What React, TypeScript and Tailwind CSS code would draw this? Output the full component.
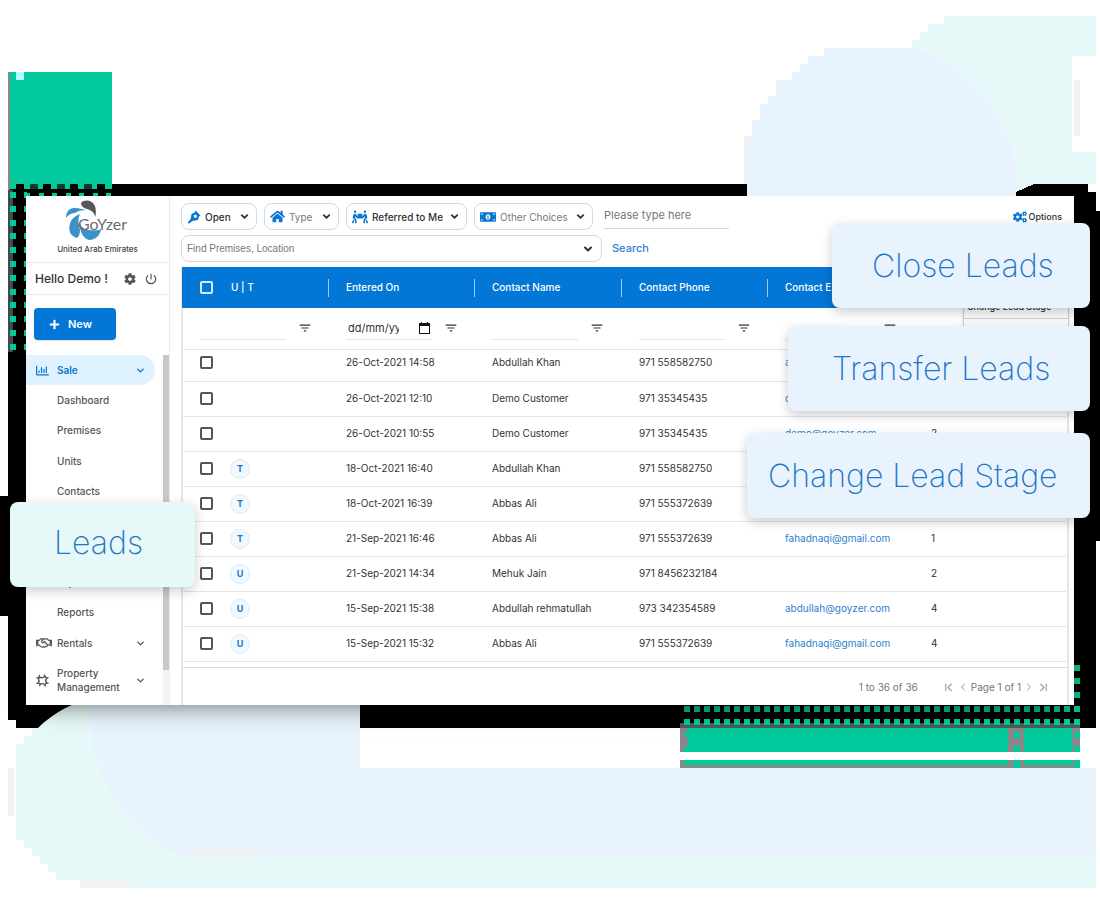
import React from 'react';
import { ChevronDown, ChevronLeft, ChevronRight, ChevronFirst, ChevronLast } from 'lucide-react';
import { FaCog, FaCogs, FaHome, FaMoneyBillAlt, FaPeopleCarry, FaPlus, FaRegChartBar, FaRegHandshake } from 'react-icons/fa';
import { MdFilterList, MdOutlinePowerSettingsNew } from 'react-icons/md';

type Lead = {
  tag?: 'T' | 'U';
  entered: string;
  name: string;
  phone: string;
  email: string;
  count: string;
};

const leads: Lead[] = [
  { entered: '26-Oct-2021 14:58', name: 'Abdullah Khan', phone: '971 558582750', email: 'abdullah@goyzer.com', count: '' },
  { entered: '26-Oct-2021 12:10', name: 'Demo Customer', phone: '971 35345435', email: 'demo@goyzer.com', count: '' },
  { entered: '26-Oct-2021 10:55', name: 'Demo Customer', phone: '971 35345435', email: 'demo@goyzer.com', count: '2' },
  { tag: 'T', entered: '18-Oct-2021 16:40', name: 'Abdullah Khan', phone: '971 558582750', email: '', count: '' },
  { tag: 'T', entered: '18-Oct-2021 16:39', name: 'Abbas Ali', phone: '971 555372639', email: '', count: '' },
  { tag: 'T', entered: '21-Sep-2021 16:46', name: 'Abbas Ali', phone: '971 555372639', email: 'fahadnaqi@gmail.com', count: '1' },
  { tag: 'U', entered: '21-Sep-2021 14:34', name: 'Mehuk Jain', phone: '971 8456232184', email: '', count: '2' },
  { tag: 'U', entered: '15-Sep-2021 15:38', name: 'Abdullah rehmatullah', phone: '973 342354589', email: 'abdullah@goyzer.com', count: '4' },
  { tag: 'U', entered: '15-Sep-2021 15:32', name: 'Abbas Ali', phone: '971 555372639', email: 'fahadnaqi@gmail.com', count: '4' },
];

const range = (n: number) => Array.from({ length: n }, (_, i) => i);

function Backdrop() {
  return (
    <svg className="absolute left-0 top-0" width="1100" height="900" viewBox="0 0 1100 900" shapeRendering="crispEdges" aria-hidden="true">
      <path fill="#e6f8f7" d="M944 16H1096V56H1072V152H1096V184H900V48H912V40H920V32H928V24H944Z" />
      <path fill="#f2f2f2" d="M1074 80h6v56h-6zM744 136h8v48h-8z" />
      <path fill="#000" d="M8 184H1088V192H1096V211H1100V541H1096V728H16V720H8V616H0V496H8Z" />
      <path fill="#e6f8f7" d="M1000 150H1072V184H1034L1016 192H1000Z" />
      <path
        fill="#e8f3fd"
        shapeRendering="auto"
        d="M824 48H912C975 66 1016 122 1016 183V200H747V136H752V120H760V104H768V96H776V80H792V72H800V64H808V56H824Z"
      />
      <path
        fill="#e6f8f7"
        shapeRendering="auto"
        d="M85 700C66 706 50 716 38 728H32V736H24V744H16V840H24V848H32V856H40V864H48V872H56V880H80V888H1096V768H360V700Z"
      />
      <path fill="#f2f2f2" d="M8 768h6v48H8zM80 881h50v7H80z" />
      <path fill="#e8f3fd" shapeRendering="auto" d="M90 700H360V768H1096V856H180C128 832 92 780 90 720Z" />
      <path fill="#f3efef" d="M192 851h72v5h-72z" />

      <path fill="#02ca9c" d="M8 72h104v117H8z" />
      <path fill="#888" d="M8 72h2v118H8z" />
      <path fill="#444c4a" d="M8 190h5v162H8z" />
      <path fill="#b0ffff" d="M16 72h8v8h-8z" />
      {range(7).map((i) => (
        <rect key={`n${i}`} x={16 + Math.round(i * 13.5)} y="184" width="8" height="5" fill={i % 2 ? '#0b3b31' : '#000'} />
      ))}
      {range(7).map((i) => (
        <rect key={`t${i}`} x={25 + Math.round(i * 13.5)} y="193" width="5" height="4" fill="#02ca9c" />
      ))}
      {range(12).map((i) => (
        <React.Fragment key={`l${i}`}>
          <rect x="10" y={192 + Math.round(i * 13.8)} width="6" height="6" fill="#02ca9c" />
          <rect x="24" y={192 + Math.round(i * 13.8)} width="3" height="6" fill="#02ca9c" />
        </React.Fragment>
      ))}

      <path fill="#888" d="M680 728H1080V752H680ZM680 760H1080V768H680Z" />
      <path fill="#4c5c59" d="M680 723h400v5H680z" />
      <path fill="#02ca9c" d="M688 728H1008V752H684V746H688V737H684V732H688ZM1024 728h48v24h-48zM684 760h324v5H684zM1024 760h48v5h-48z" />
      <path fill="#02ca9c" d="M1014 732h6v6h-6zM1014 746h6v6h-6zM1074 732h6v6h-6zM1074 746h6v6h-6zM1014 760h6v8h-6zM1074 760h6v8h-6z" />
      {range(40).map((i) => (
        <React.Fragment key={`b${i}`}>
          <rect x={684 + i * 10} y="706" width="6" height="6" fill="#08b98f" />
          <rect x={684 + i * 10} y="719" width="6" height="6" fill="#02ca9c" />
        </React.Fragment>
      ))}
      <path fill="#08b98f" d="M1074 665h6v6h-6zM1074 678h6v6h-6zM1074 692h6v6h-6z" />
    </svg>
  );
}

function Logo() {
  return (
    <svg width="76" height="43" viewBox="0 0 76 43" role="img" aria-label="GoYzer">
      <path fill="#565659" d="M21 4C25 0 32 1 35 7 36 10 36 14 35.500 18 34 13 31 11 27 10 23 9 21 7 21 4Z" />
      <path fill="#3b93c5" d="M6 19C6 12 10 8.500 15 9 19 9 22 10 26 11 21 11 18 12 15 14 12 14 9 15 6 19Z" />
      <path fill="#3b93c5" d="M20 15C17 21 19 26 20 31 20 35 19 37 17 39 10 37 8 31 10 25 11 20 15 17 20 15Z" />
      <path fill="#3b93c5" d="M20 24C22 30 26 31 30 31 34 31 38 32 41 30 40 37 35 41 29 41 24 40 19 33 20 24Z" />
      <text x="18" y="31" fontFamily="Lato, sans-serif" fontSize="16" fill="#6c6c70">
        GoYzer
      </text>
    </svg>
  );
}

function PropertyIcon() {
  return (
    <svg width="13" height="13" viewBox="0 0 14 14" fill="none" stroke="#555" strokeWidth="1.5" strokeLinecap="round" strokeLinejoin="round" aria-hidden="true">
      <path d="M4 3.500Q7 5 9.500 2.500L11.500 4.500Q9.500 7 11.500 9.500L9.500 11.500Q7 9.500 4.500 11L2.500 9.500Q4 7 2.500 5Z" />
      <path d="M3.500 1.500 4 3.500 1 4.200M9 1 9.500 2.500M13 4 11.500 4.500M11.500 9.500 13 9.800M9.500 11.500 10 13M4.500 11 4 12.500M2.500 9.500 1 10" />
    </svg>
  );
}

function PenIcon() {
  return (
    <svg width="14" height="14" viewBox="0 0 14 14" aria-hidden="true">
      <path fill="currentColor" fillRule="evenodd" d="M8.500.5 13.500 5.500 12 6.500 10.800 10 5.500 11 2 13.500.5 13 3.800 8.500 4.500 4 7.800 2.200ZM8.200 4.800A1.500 1.500 0 1 0 9.500 7.300 1.500 1.500 0 0 0 8.200 4.800Z" />
    </svg>
  );
}

function CalendarIcon() {
  return (
    <svg width="11" height="12" viewBox="0 0 11 12" className="shrink-0" aria-hidden="true">
      <path fill="#111" fillRule="evenodd" d="M2 0h1v1h5V0h1v1h2v11H0V1h2ZM1 4v7h9V4Z" />
    </svg>
  );
}

function PickList({ label, width, muted, icon }: { label: string; width: string; muted?: boolean; icon: React.ReactNode }) {
  return (
    <label className={`flex h-[27px] items-center rounded-lg border border-[#d3d8df] bg-white pl-[5px] pr-1.5 ${width}`}>
      <span className="shrink-0 text-[#0b76d1]">{icon}</span>
      <select
        aria-label={label}
        className={`ml-1 min-w-0 flex-1 appearance-none bg-transparent text-[10px] leading-4 outline-none ${muted ? 'text-[#777]' : 'font-medium text-[#333]'}`}
      >
        <option>{label}</option>
      </select>
      <ChevronDown size={11} strokeWidth={4} className="shrink-0 text-[#333]" />
    </label>
  );
}

const navLink = 'flex h-[30px] items-center pl-[31px]';

function Sidebar() {
  return (
    <aside className="flex w-36 shrink-0 flex-col border-r border-[#ececec]">
      <div className="flex h-[67px] flex-col items-center border-b border-[#ececec] pt-[3px]">
        <Logo />
        <p className="text-[8px] font-medium leading-[14px] text-[#444]">United Arab Emirates</p>
      </div>
      <div className="flex h-8 items-center border-b border-[#ececec] pl-[9px] pr-[11px]">
        <p className="flex-1 whitespace-nowrap text-xs font-medium text-[#333]">Hello Demo !</p>
        <button aria-label="Settings" className="text-[#555]">
          <FaCog size={12} />
        </button>
        <button aria-label="Log out" className="ml-2 text-[#555]">
          <MdOutlinePowerSettingsNew size={14} />
        </button>
      </div>
      <button className="ml-2 mt-[13px] flex h-8 w-[82px] items-center gap-2 rounded bg-[#0377d6] pl-[15px] text-[11px] font-semibold text-white shadow-sm">
        <FaPlus size={11} />
        New
      </button>
      <div className="mt-[15px] flex flex-1">
        <nav className="flex-1 text-[10px] font-medium text-[#555]">
          <div className="flex h-[303px] flex-col justify-between">
            <a href="#sale" className="mr-2 flex h-[30px] items-center rounded-r-full bg-[#dff2ff] pl-2.5 pr-[9px] font-semibold text-[#0b76c8]">
              <FaRegChartBar size={13} />
              <span className="ml-2 flex-1">Sale</span>
              <ChevronDown size={11} strokeWidth={3} />
            </a>
            <a href="#dashboard" className={navLink}>Dashboard</a>
            <a href="#premises" className={navLink}>Premises</a>
            <a href="#units" className={navLink}>Units</a>
            <a href="#contacts" className={navLink}>Contacts</a>
            <div className="h-[60px]" />
            <a href="#expenses" className={navLink}>Expenses</a>
            <a href="#reports" className={navLink}>Reports</a>
            <a href="#rentals" className="mr-2 flex h-[30px] items-center pl-2.5 pr-[9px]">
              <FaRegHandshake size={16} />
              <span className="ml-[5px] flex-1">Rentals</span>
              <ChevronDown size={11} strokeWidth={3} />
            </a>
          </div>
          <a href="#property" className="mr-2 flex h-11 items-center pl-2.5 pr-[9px] leading-[14px]">
            <PropertyIcon />
            <span className="ml-2 flex-1">
              Property
              <br />
              Management
            </span>
            <ChevronDown size={11} strokeWidth={3} />
          </a>
        </nav>
        <div className="w-1.5 bg-[#f4f4f4]">
          <div className="h-[315px] bg-[#c8c8c8]" />
        </div>
      </div>
    </aside>
  );
}

function FilterCell({ label, date }: { label: string; date?: boolean }) {
  return (
    <td className="p-0 pl-[18px]">
      <div className="flex items-center">
        <div className="flex h-6 w-[86px] items-center border-b border-[#e6e6e6]">
          <input
            aria-label={label}
            placeholder={date ? 'dd/mm/yyyy' : ''}
            className={`min-w-0 bg-transparent text-[11px] text-[#333] outline-none placeholder:text-[#333] ${date ? 'w-[53px] pl-0.5' : 'w-full'}`}
          />
          {date && (
            <span className="ml-auto mr-0.5">
              <CalendarIcon />
            </span>
          )}
        </div>
        <button aria-label={`Filter ${label}`} className="ml-3 text-[#333]">
          <MdFilterList size={14} />
        </button>
      </div>
    </td>
  );
}

function Check({ label, light }: { label: string; light?: boolean }) {
  return (
    <input
      type="checkbox"
      aria-label={label}
      className={`block size-[13px] appearance-none rounded-[2px] border-2 ${light ? 'border-[#d5e9fa]' : 'border-[#555]'}`}
    />
  );
}

const headings = ['Entered On', 'Contact Name', 'Contact Phone', 'Contact Email'];

function LeadsTable() {
  return (
    <div className="border-x-2 border-[#e6e6e6]">
      <table className="-ml-px w-full table-fixed border-collapse text-left text-[10px] text-[#333]">
        <colgroup>
          <col className="w-[146px]" />
          <col className="w-[146px]" />
          <col className="w-[147px]" />
          <col className="w-[146px]" />
          <col className="w-[146px]" />
          <col />
        </colgroup>
        <thead>
          <tr className="h-[41px] bg-[#0377d6] text-white">
            <th className="p-0 pl-[18px]">
              <div className="flex items-center gap-[18px] font-medium">
                <Check label="Select all leads" light />
                <span>U | T</span>
              </div>
            </th>
            {headings.map((h) => (
              <th key={h} className="p-0 font-medium">
                <div className="flex h-[18px] items-center border-l border-[#9fcaf0] pl-[17px]">{h}</div>
              </th>
            ))}
            <th className="p-0" aria-label="Count" />
          </tr>
          <tr className="h-[41px] border-b border-[#e4e4e4]">
            <FilterCell label="U T" />
            <FilterCell label="Entered On" date />
            <FilterCell label="Contact Name" />
            <FilterCell label="Contact Phone" />
            <FilterCell label="Contact Email" />
            <td />
          </tr>
        </thead>
        <tbody>
          {leads.map((lead, i) => (
            <tr key={i} className={`border-b border-[#e4e4e4] [&>td]:pl-[18px] ${i === 0 ? 'h-8 [&>td]:pb-[5px]' : 'h-[35px]'}`}>
              <td className="p-0">
                <div className="flex items-center gap-[17px]">
                  <Check label={`Select ${lead.name}`} />
                  {lead.tag && (
                    <span className="flex size-5 items-center justify-center rounded-full border border-[#d5edf8] bg-[#f0f9fe] text-[9px] font-bold text-[#2277c8]">
                      {lead.tag}
                    </span>
                  )}
                </div>
              </td>
              <td className="p-0">{lead.entered}</td>
              <td className="p-0">{lead.name}</td>
              <td className="p-0">{lead.phone}</td>
              <td className="p-0">
                {lead.email && (
                  <a href={`mailto:${lead.email}`} className="text-[#2b7fd0]">
                    {lead.email}
                  </a>
                )}
              </td>
              <td className="p-0">{lead.count}</td>
            </tr>
          ))}
        </tbody>
      </table>
      <div className="mt-[5px] flex h-[38px] items-center justify-end border-t border-[#dcdcdc] pr-[17px] pt-0.5 text-[10px] text-[#777]">
        <span>1 to 36 of 36</span>
        <button aria-label="First page" className="ml-6 text-[#999]">
          <ChevronFirst size={13} />
        </button>
        <button aria-label="Previous page" className="ml-0.5 text-[#999]">
          <ChevronLeft size={12} />
        </button>
        <span className="mx-0.5">Page 1 of 1</span>
        <button aria-label="Next page" className="text-[#999]">
          <ChevronRight size={12} />
        </button>
        <button aria-label="Last page" className="ml-0.5 text-[#999]">
          <ChevronLast size={13} />
        </button>
      </div>
    </div>
  );
}

function Toolbar() {
  return (
    <div className="flex flex-col gap-[5px] pb-[5px] pt-[7px]">
      <div className="flex items-center">
        <div className="flex gap-[7px]">
          <PickList label="Open" width="w-[76px]" icon={<PenIcon />} />
          <PickList label="Type" width="w-[75px]" muted icon={<FaHome size={15} />} />
          <PickList label="Referred to Me" width="w-[121px]" icon={<FaPeopleCarry size={16} />} />
          <PickList label="Other Choices" width="w-[119px]" muted icon={<FaMoneyBillAlt size={16} />} />
        </div>
        <input
          aria-label="Keyword"
          placeholder="Please type here"
          className="ml-[11px] h-[25px] w-[125px] border-b border-[#d5dade] bg-transparent pb-0.5 text-[11px] outline-none placeholder:text-[#777]"
        />
        <button className="ml-auto mr-[7px] flex items-center gap-0.5 text-[9px] font-medium text-[#333]">
          <FaCogs size={14} className="text-[#0b76d1]" />
          Options
        </button>
      </div>
      <div className="flex items-center">
        <label className="flex h-[27px] w-[421px] items-center rounded-lg border border-[#d3d8df] pl-[5px] pr-[7px]">
          <input
            aria-label="Find Premises, Location"
            placeholder="Find Premises, Location"
            className="min-w-0 flex-1 font-['Liberation_Sans',Arial,sans-serif] text-[10px] outline-none placeholder:text-[#777]"
          />
          <ChevronDown size={12} strokeWidth={4} className="text-[#333]" />
        </label>
        <button className="ml-2.5 text-[11px] font-medium text-[#2b7fd0]">Search</button>
      </div>
    </div>
  );
}

const callout =
  'flex h-[85px] items-center rounded-lg text-[32px] font-extralight text-[#1f76c6] whitespace-nowrap shadow-[0_4px_12px_rgba(0,0,0,0.2)]';

export default function App() {
  return (
    <div className="relative min-h-[900px] overflow-hidden bg-white pt-[196px] font-[Inter,'Noto_Sans',sans-serif]">
      <Backdrop />
      <div className="relative mx-[26px] flex h-[509px] overflow-hidden bg-white shadow-[0_14px_22px_-12px_rgba(0,0,0,0.5)]">
        <Sidebar />
        <main className="min-w-0 flex-1 pl-[11px] pr-[5px]">
          <Toolbar />
          <LeadsTable />
        </main>
        <div className="absolute right-[5px] top-[98px] w-[106px] border border-[#ccc] bg-[#fafafa] text-[9px] font-medium text-[#333] shadow-md">
          <button className="block h-6 w-full border-b border-[#ccc] pl-[3px] text-left">Change Lead Stage</button>
          <div className="h-3" />
        </div>
      </div>
      <div className="absolute left-2.5 top-[502px]">
        <div className={`${callout} w-[185px] bg-[#e6f8f7] pb-1 pl-11`}>Leads</div>
      </div>
      <div className="absolute right-2.5 top-[223px] flex flex-col items-end">
        <div className={`${callout} w-[258px] bg-[#e8f3fd] pl-10`}>Close Leads</div>
        <div className={`${callout} mt-[18px] w-[302px] bg-[#e8f3fd] pl-11`}>Transfer Leads</div>
        <div className={`${callout} mt-[22px] w-[343px] bg-[#e8f3fd] pl-[21px]`}>Change Lead Stage</div>
      </div>
    </div>
  );
}
